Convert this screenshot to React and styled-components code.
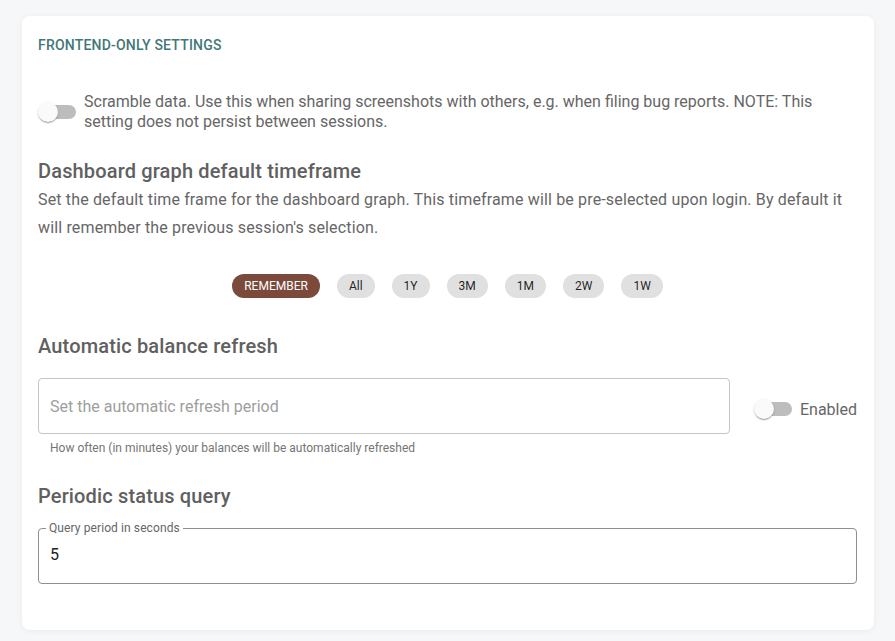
import React, { useState } from 'react'
import styled, { createGlobalStyle } from 'styled-components'

const GlobalStyle = createGlobalStyle`
   body {
      margin: 0;
      background: #f6f7f9;
      font-family: Roboto, 'Liberation Sans', sans-serif;
   }
`

const timeframes = ['REMEMBER', 'All', '1Y', '3M', '1M', '2W', '1W']

const Switch = ({ checked }) => (
   <SwitchBase>
      <Track />
      <Thumb $checked={checked} />
   </SwitchBase>
)

const App = () => {
   const [selected, setSelected] = useState('REMEMBER')
   return (
      <Page>
         <GlobalStyle />
         <Card>
            <CardTitle>FRONTEND-ONLY SETTINGS</CardTitle>

            <ScrambleRow>
               <Switch />
               <SwitchText>
                  Scramble data. Use this when sharing screenshots with others, e.g. when
                  filing bug reports. NOTE: This setting does not persist between sessions.
               </SwitchText>
            </ScrambleRow>

            <Heading>Dashboard graph default timeframe</Heading>
            <Description>
               Set the default time frame for the dashboard graph. This timeframe will be
               pre-selected upon login. By default it will remember the previous session's
               selection.
            </Description>

            <Chips>
               {timeframes.map((t) => (
                  <Chip key={t} $active={t === selected} onClick={() => setSelected(t)}>
                     {t}
                  </Chip>
               ))}
            </Chips>

            <Heading $top={32}>Automatic balance refresh</Heading>
            <RefreshRow>
               <FieldColumn>
                  <PlainInput placeholder='Set the automatic refresh period' />
                  <Hint>How often (in minutes) your balances will be automatically refreshed</Hint>
               </FieldColumn>
               <EnabledToggle>
                  <Switch />
                  <ToggleLabel>Enabled</ToggleLabel>
               </EnabledToggle>
            </RefreshRow>

            <Heading $top={22}>Periodic status query</Heading>
            <Outlined>
               <Legend>Query period in seconds</Legend>
               <ValueInput defaultValue='5' />
            </Outlined>
         </Card>
      </Page>
   )
}

const Page = styled.div`
   padding: 16px 21px 11px 22px;
`
const Card = styled.div`
   background: #fff;
   border-radius: 8px;
   box-shadow: 0 1px 6px rgba(0, 0, 0, 0.05);
   padding: 19px 17px 46px 16px;
   height: 614px;
   box-sizing: border-box;
`
const CardTitle = styled.div`
   font-size: 14px;
   font-weight: 500;
   line-height: 20px;
   color: #437779;
   letter-spacing: 0.2px;
`
const ScrambleRow = styled.div`
   display: flex;
   align-items: center;
   gap: 8px;
   margin-top: 37px;
`
const SwitchBase = styled.span`
   position: relative;
   flex: 0 0 38px;
   width: 38px;
   height: 20px;
`
const Track = styled.span`
   position: absolute;
   left: 3px;
   right: 0;
   top: 3px;
   height: 14px;
   border-radius: 7px;
   background: #bdbdbd;
`
const Thumb = styled.span`
   position: absolute;
   top: 0;
   left: ${(p) => (p.$checked ? '18px' : '0')};
   width: 20px;
   height: 20px;
   border-radius: 50%;
   background: #fafafa;
   box-shadow: 0 2px 1px -1px rgba(0, 0, 0, 0.2), 0 1px 1px rgba(0, 0, 0, 0.14),
      0 1px 3px rgba(0, 0, 0, 0.12);
`
const SwitchText = styled.div`
   font-size: 16px;
   line-height: 20px;
   color: #666;
`
const Heading = styled.h2`
   margin: ${(p) => p.$top ?? 23}px 0 0;
   font-size: 20px;
   font-weight: 500;
   line-height: 32px;
   color: #606060;
   letter-spacing: 0.15px;
`
const Description = styled.p`
   margin: -1px 0 0;
   font-size: 16px;
   line-height: 28px;
   color: #666;
   letter-spacing: 0.15px;
`
const Chips = styled.div`
   display: flex;
   justify-content: center;
   gap: 17px;
   margin-top: 32px;
`
const Chip = styled.button`
   height: 24px;
   padding: 0 12px;
   border: none;
   border-radius: 12px;
   font-family: inherit;
   font-size: 12px;
   cursor: pointer;
   background: ${(p) => (p.$active ? '#7b4a3b' : '#e0e0e0')};
   color: ${(p) => (p.$active ? '#fff' : 'rgba(0, 0, 0, 0.87)')};
`
const RefreshRow = styled.div`
   display: flex;
   align-items: flex-start;
   margin-top: 16px;
`
const FieldColumn = styled.div`
   width: 692px;
`
const PlainInput = styled.input`
   display: block;
   width: 100%;
   height: 56px;
   box-sizing: border-box;
   padding: 0 11px;
   border: 1px solid #c4c4c4;
   border-radius: 4px;
   font-family: inherit;
   font-size: 16px;
   color: #222;
   outline: none;
   &::placeholder {
      color: #9e9e9e;
   }
`
const Hint = styled.div`
   margin: 4px 12px 0;
   font-size: 12px;
   line-height: 20px;
   color: #757575;
`
const EnabledToggle = styled.label`
   display: flex;
   align-items: center;
   gap: 8px;
   margin-left: auto;
   height: 62px;
`
const ToggleLabel = styled.span`
   font-size: 16px;
   color: #666;
`
const Outlined = styled.fieldset`
   margin: 16px 0 0;
   padding: 0 11px;
   height: 56px;
   box-sizing: border-box;
   border: 1px solid #8f8f8f;
   border-radius: 4px;
   position: relative;
`
const Legend = styled.legend`
   padding: 0 3px;
   margin-left: -4px;
   font-size: 12px;
   line-height: 1px;
   color: #666;
   letter-spacing: 0.1px;
`
const ValueInput = styled.input`
   display: block;
   width: 100%;
   margin-top: 16px;
   padding: 0;
   border: none;
   outline: none;
   font-family: inherit;
   font-size: 16px;
   color: #222;
   background: transparent;
`

export default App
